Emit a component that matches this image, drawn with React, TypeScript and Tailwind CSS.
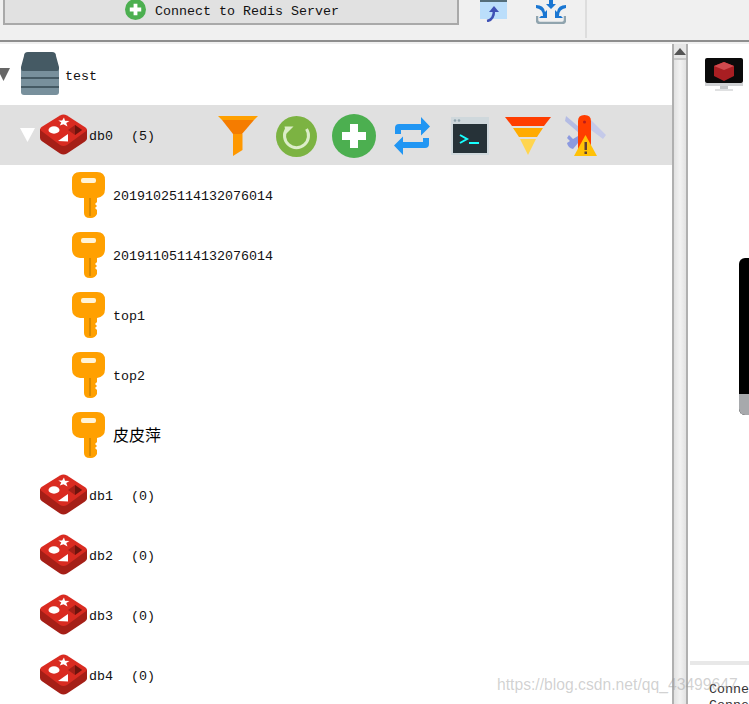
import React from "react";

const mono = "font-['Liberation_Mono','Noto_Sans_CJK_SC',monospace] text-[13.33px] leading-4 text-[#111]";
const rowText = `${mono} mt-1`;

function PlusCircle({ size }: { size: number }) {
  return (
    <svg width={size} height={size} viewBox="0 0 44 44" className="shrink-0">
      <circle cx="22" cy="22" r="22" fill="#4caf50" />
      <path d="M18 10h8v8h8v8h-8v8h-8v-8h-8v-8h8z" fill="#fff" />
    </svg>
  );
}

function Redis() {
  return (
    <svg width="47" height="42" viewBox="0 0 47 42" className="shrink-0">
      <path d="M0 15v9q0 2 2 3.200L20 39.500q3.500 2 7 0l18-12q2-1.300 2-3v-9z" fill="#a51f17" />
      <path d="M1.500 13 20 1.500q3.500-2 7 0L45.500 13.500q2.500 2 0 4L27 31q-3.500 2-7 0L1.500 17q-2.500-2 0-4z" fill="#d92b21" />
      <ellipse cx="14" cy="16" rx="5.500" ry="3.700" fill="#fff" />
      <path d="m24 3.500 1 3.200 4.500.2-3.300 2.100 1.300 3.500-4-2.200-3.700 1.300 1.500-3-3-2 3.800-.2z" fill="#fff" />
      <path d="M18 27 28 20v7.500z" fill="#fff" />
      <path d="m28 16 7-5 7 5-7 5z" fill="#a51f17" />
      <path d="m35 11 7 5-7 5z" fill="#6e140e" />
    </svg>
  );
}

function Key() {
  return (
    <svg width="33" height="46" viewBox="0 0 33 46" className="shrink-0">
      <path d="M8 0h17q8 0 8 8v9q0 8-8 9v4l-2 2 2 2-2 2 2 2v4q-2 4-6 4h-1q-6 0-6-5V26H8q-8-1-8-9V8q0-8 8-8z" fill="#ffa000" />
      <rect x="9" y="6" width="15" height="5" rx="2" fill="#fff3d6" />
      <rect x="17" y="26" width="2" height="18" fill="#d98a00" />
    </svg>
  );
}

function Db() {
  return (
    <svg width="38" height="43" viewBox="0 0 38 43" className="shrink-0">
      <path d="M0 18h38v22q0 3-3 3H3q-3 0-3-3z" fill="#78909c" />
      <rect x="0" y="25" width="38" height="2" fill="#455a64" />
      <rect x="0" y="34" width="38" height="2" fill="#455a64" />
      <path d="M3 4q0-4 4-4h24q4 0 4 4l3 11v2q0 2-3 2H3q-3 0-3-2v-2z" fill="#455a64" />
    </svg>
  );
}

function Filter() {
  return (
    <svg width="40" height="40" viewBox="0 0 40 40" className="shrink-0">
      <path d="M0 0h40l-4 4H4z" fill="#ffa000" />
      <path d="M4 4h32L24 18H15z" fill="#f57c00" />
      <path d="M15 18h9.500v16L15 40z" fill="#ff9800" />
    </svg>
  );
}

function Refresh() {
  return (
    <svg width="41" height="41" viewBox="0 0 41 41" className="shrink-0">
      <circle cx="20.500" cy="20.500" r="20.500" fill="#7cb342" />
      <path d="M30.500 13A12 12 0 1 1 10.500 13" fill="none" stroke="#dcedc8" strokeWidth="3" />
      <path d="M8.500 10.500h9l-7.500 7.500z" fill="#dcedc8" />
    </svg>
  );
}

function Swap() {
  return (
    <svg width="38" height="38" viewBox="0 0 38 38" className="shrink-0">
      <path d="M2 17v-6q0-4 4-4h22V0l9 9.500-9 9V13H8v4z" fill="#2196f3" />
      <path d="M36 21v6q0 4-4 4H10v7l-9-9.500 9-9V25h20v-4z" fill="#2196f3" />
    </svg>
  );
}

function Terminal() {
  return (
    <svg width="38" height="38" viewBox="0 0 38 38" className="shrink-0">
      <rect width="38" height="38" fill="#cfd8dc" />
      <rect x="2" y="7" width="34" height="29" fill="#263238" />
      <circle cx="4" cy="3.500" r="1.300" fill="#90a4ae" />
      <circle cx="8" cy="3.500" r="1.300" fill="#90a4ae" />
      <path d="m9 18 7 4-7 4" fill="none" stroke="#18ffff" strokeWidth="2" />
      <rect x="18" y="25" width="10" height="2" fill="#18ffff" />
    </svg>
  );
}

function Funnel() {
  return (
    <svg width="46" height="38" viewBox="0 0 46 38" className="shrink-0">
      <path d="M0 0h46l-7 9H7z" fill="#ff3d00" />
      <path d="M8 11h30l-6 9H14z" fill="#ffab00" />
      <path d="M15 22h16l-8 16z" fill="#ffd54f" />
    </svg>
  );
}

function Tools() {
  return (
    <svg width="41" height="43" viewBox="0 0 41 43" className="shrink-0">
      <path d="M1 1l13 11v6L0 6z" fill="#b4bce4" />
      <path d="M26 5l15 15-3 4-12-9z" fill="#c5cae9" />
      <path d="M4 20l4 4 5-3v7l-5 6q-5-1-6-6l3-2-3-3z" fill="#8c9ae0" />
      <path d="M13 6q0-6 6.500-6T26 6v28H13z" fill="#ff3d00" />
      <circle cx="19.500" cy="7" r="1.500" fill="#b71c1c" />
      <path d="M20.500 20 32 41H9z" fill="#ffc107" />
      <rect x="19.500" y="27" width="2.500" height="8" fill="#5d4037" />
      <rect x="19.500" y="36.500" width="2.500" height="2.500" fill="#5d4037" />
    </svg>
  );
}

function Upload() {
  return (
    <svg width="27" height="22" viewBox="0 0 27 22" className="shrink-0">
      <rect width="27" height="19" fill="#bbdefb" />
      <rect width="27" height="2" fill="#546e7a" />
      <path d="M7 21q7-1 7-11" fill="none" stroke="#3f51b5" strokeWidth="2.500" />
      <path d="M14 6l5 6H9z" fill="#3f51b5" />
    </svg>
  );
}

function Merge() {
  return (
    <svg width="30" height="24" viewBox="0 0 30 24" className="shrink-0">
      <path d="M1 16v4q0 3 3 3h22q3 0 3-3v-4" fill="none" stroke="#90a4ae" strokeWidth="2.500" />
      <path d="M15 9l-5-5h3V0h4v4h3z" fill="#1976d2" />
      <path d="M0 5q8 0 9 7l2-2v8H3l2-2h2Q7 9 0 8z" fill="#1976d2" />
      <path d="M30 5q-8 0-9 7l-2-2v8h8l-2-2h-2q0-7 7-8z" fill="#1976d2" />
    </svg>
  );
}

function Monitor() {
  return (
    <svg width="38" height="33" viewBox="0 0 38 33" className="shrink-0">
      <rect x="0" y="0" width="38" height="25" rx="2" fill="#0a0a0a" />
      <rect x="0" y="25" width="38" height="3" fill="#cfd1d3" />
      <rect x="15" y="28" width="8" height="3" fill="#c4c6c8" />
      <rect x="10" y="31" width="18" height="2" fill="#dfe0e1" />
      <path d="M19 4l10 4v10l-10 5-10-5V8z" fill="#a81e22" />
      <path d="M19 4l10 4-10 4-10-4z" fill="#cf4a4e" />
    </svg>
  );
}

function KeyRow({ label }: { label: string }) {
  return (
    <div className="flex h-[60px] items-center pl-[72px]">
      <Key />
      <span className={`${rowText} ml-2`}>{label}</span>
    </div>
  );
}

function DbRow({ name, count }: { name: string; count: number }) {
  return (
    <div className="flex h-[60px] items-center pl-10">
      <Redis />
      <span className={`${rowText} ml-0.5 w-[42px]`}>{name}</span>
      <span className={rowText}>({count})</span>
    </div>
  );
}

export default function App() {
  return (
    <div className="relative flex h-[704px] w-[749px] flex-col overflow-hidden bg-white">
      <div className="flex h-10 shrink-0 items-start bg-[#f0f0f0]">
        <div className="ml-[3px] flex h-[25px] w-[456px] items-center border-2 border-t-0 border-[#a9a9a9] bg-[#e1e1e1] pb-1 pl-[120px]">
          <PlusCircle size={21} />
          <span className={`${rowText} ml-[9px]`}>Connect to Redis Server</span>
        </div>
        <div className="ml-[21px]"><Upload /></div>
        <div className="ml-[29px]"><Merge /></div>
        <div className="ml-[19px] h-[38px] w-0.5 bg-[#dddddd]" />
      </div>
      <div className="h-0.5 shrink-0 bg-[#8e8e8e]" />
      <div className="h-0.5 shrink-0 bg-[#f0f0f0]" />

      <div className="flex min-h-0 flex-1">
        <div className="w-[672px] shrink-0 overflow-hidden">
          <div className="flex h-[61px] items-center pb-0.5">
            <svg width="10" height="13" viewBox="0 0 10 13" className="mt-0.5 shrink-0">
              <path d="M0 0h10L3.500 13 0 6z" fill="#666" />
            </svg>
            <div className="ml-[11px]"><Db /></div>
            <span className={`${mono} ml-[6px] mt-1.5`}>test</span>
          </div>
          <div className="flex h-[60px] items-center bg-[#e0e0e0] pl-5">
            <svg width="15" height="14" viewBox="0 0 15 14" className="shrink-0">
              <path d="M0 0h15l-7.500 14z" fill="#fff" />
            </svg>
            <div className="ml-[5px]"><Redis /></div>
            <span className={`${rowText} ml-0.5 w-[42px]`}>db0</span>
            <span className={`${rowText} w-[87px]`}>(5)</span>
            <div className="mt-0.5 flex items-center">
              <Filter />
              <div className="ml-[18px]"><Refresh /></div>
              <div className="ml-[15px]"><PlusCircle size={44} /></div>
              <div className="ml-[17px]"><Swap /></div>
              <div className="ml-5"><Terminal /></div>
              <div className="ml-4"><Funnel /></div>
              <div className="ml-3.5"><Tools /></div>
            </div>
          </div>
          <KeyRow label="20191025114132076014" />
          <KeyRow label="20191105114132076014" />
          <KeyRow label="top1" />
          <KeyRow label="top2" />
          <div className="flex h-[60px] items-center pl-[72px]">
            <Key />
            <span className="ml-2 -mt-0.5 font-['Noto_Sans_CJK_SC',sans-serif] text-base leading-5 text-black">皮皮萍</span>
          </div>
          <DbRow name="db1" count={0} />
          <DbRow name="db2" count={0} />
          <DbRow name="db3" count={0} />
          <DbRow name="db4" count={0} />
        </div>

        <div className="flex w-4 shrink-0 flex-col border-x-2 border-x-[#b0b0b0] bg-gradient-to-r from-[#e2e2e2] via-[#f2f2f2] to-[#e2e2e2]">
          <div className="flex h-4 items-start justify-center border-b-2 border-[#c8c8c8] bg-[#e6e6e6] pt-1">
            <svg width="12" height="7" viewBox="0 0 12 7"><path d="M6 0l6 7H0z" fill="#555" /></svg>
          </div>
        </div>

        <div className="flex min-w-0 flex-1 flex-col pl-0.5">
          <div className="flex min-h-0 flex-1 flex-col pt-3.5">
            <div className="pl-[15px]"><Monitor /></div>
            <div className="ml-[49px] mt-[167px] flex h-[157px] w-3 flex-col overflow-hidden rounded-l-md bg-black">
              <div className="flex-1" />
              <div className="h-[21px] bg-[#a7a9ac]" />
            </div>
          </div>
          <div className="h-[43px] shrink-0 overflow-hidden border-t-4 border-[#e8e8e8] pl-[19px] pt-[17px]">
            <div className={`${mono} whitespace-nowrap !text-[#333]`}>Connected</div>
            <div className={`${mono} whitespace-nowrap !text-[#333]`}>Connected</div>
          </div>
        </div>
      </div>

      <div className="absolute left-[497px] top-[675px] whitespace-nowrap font-['Liberation_Sans',sans-serif] text-[15.7px] leading-5 text-[#9a9a9a]/45">
        https://blog.csdn.net/qq_43499647
      </div>
    </div>
  );
}
